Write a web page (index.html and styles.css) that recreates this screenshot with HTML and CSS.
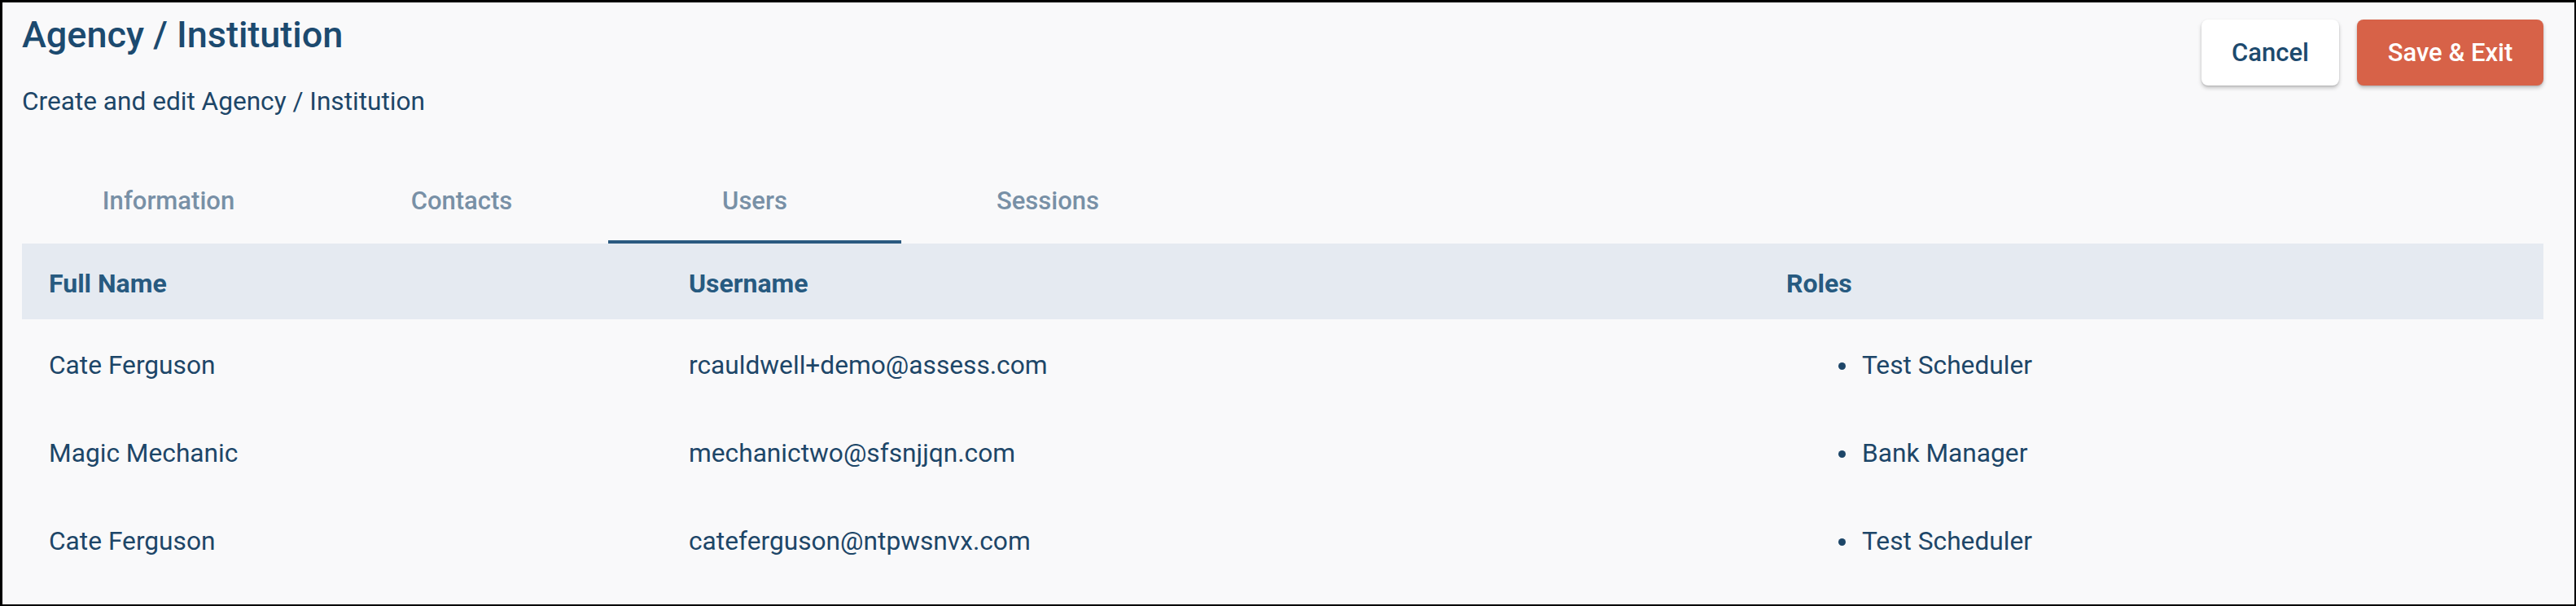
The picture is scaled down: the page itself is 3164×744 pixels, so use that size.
FILE: index.html
```html
<!DOCTYPE html>
<html lang="en">
<head>
<meta charset="utf-8">
<title>Agency / Institution</title>
<link rel="stylesheet" href="styles.css">
</head>
<body>
<div class="page">
  <header class="page-header">
    <div class="titles">
      <h1 class="title">Agency / Institution</h1>
      <p class="subtitle">Create and edit Agency / Institution</p>
    </div>
    <div class="actions">
      <button class="btn btn-cancel">Cancel</button>
      <button class="btn btn-save">Save &amp; Exit</button>
    </div>
  </header>

  <nav class="tabs">
    <div class="tab">Information</div>
    <div class="tab">Contacts</div>
    <div class="tab tab-active">Users</div>
    <div class="tab">Sessions</div>
  </nav>

  <div class="table">
    <div class="row head">
      <div class="cell">Full Name</div>
      <div class="cell">Username</div>
      <div class="cell">Roles</div>
    </div>
    <div class="row">
      <div class="cell">Cate Ferguson</div>
      <div class="cell">rcauldwell+demo@assess.com</div>
      <div class="cell"><ul class="roles"><li>Test Scheduler</li></ul></div>
    </div>
    <div class="row">
      <div class="cell">Magic Mechanic</div>
      <div class="cell">mechanictwo@sfsnjjqn.com</div>
      <div class="cell"><ul class="roles"><li>Bank Manager</li></ul></div>
    </div>
    <div class="row">
      <div class="cell">Cate Ferguson</div>
      <div class="cell">cateferguson@ntpwsnvx.com</div>
      <div class="cell"><ul class="roles"><li>Test Scheduler</li></ul></div>
    </div>
  </div>
</div>
</body>
</html>
```

FILE: styles.css
```css
* { box-sizing: border-box; }

html, body {
  margin: 0;
  padding: 0;
}

body {
  font-family: Roboto, "Liberation Sans", sans-serif;
  background: #000;
}

.page {
  width: 3164px;
  height: 744px;
  border-style: solid;
  border-color: #000;
  border-width: 3px 2px 2px 3px;
  background: #f9f9fa;
  padding: 0 38px 0 24px;
  overflow: hidden;
}

.page-header {
  display: flex;
  justify-content: space-between;
  align-items: flex-start;
}

.titles {
  padding-top: 14px;
}

.title {
  margin: 0;
  font-size: 45px;
  font-weight: 500;
  line-height: 1.172;
  color: #1c4a6f;
}

.subtitle {
  margin: 36px 0 0;
  font-size: 31.6px;
  font-weight: 400;
  line-height: 1.172;
  color: #1d4668;
}

.actions {
  display: flex;
  gap: 22px;
  margin-top: 21px;
}

.btn {
  height: 81px;
  border: none;
  border-radius: 8px;
  font-family: Roboto, "Liberation Sans", sans-serif;
  font-size: 31px;
  font-weight: 500;
  box-shadow: 0 3px 5px rgba(0, 0, 0, 0.22), 0 1px 2px rgba(0, 0, 0, 0.12);
  display: flex;
  align-items: center;
  justify-content: center;
  padding: 0;
}

.btn-cancel {
  width: 169px;
  background: #ffffff;
  color: #1d4a6e;
}

.btn-save {
  width: 229px;
  background: #d76248;
  color: #ffffff;
}

.tabs {
  display: flex;
  margin-top: 49px;
}

.tab {
  width: 360px;
  height: 107px;
  display: flex;
  align-items: center;
  justify-content: center;
  padding-top: 4px;
  font-size: 31px;
  font-weight: 500;
  line-height: 1.172;
  color: #7890a6;
}

.tab-active {
  box-shadow: inset 0 -4px 0 #2a5a80;
}

.table {
  display: flex;
  flex-direction: column;
}

.row {
  display: grid;
  grid-template-columns: 786px 1348px 963px;
  height: 108px;
  align-items: center;
  font-size: 31.7px;
  line-height: 1.172;
  color: #1d4668;
}

.row .cell {
  padding-top: 5px;
}

.row.head {
  height: 93px;
  background: #e5eaf1;
  font-size: 32px;
  font-weight: 700;
  color: #275a80;
}

.row.head .cell {
  padding-top: 7px;
}

.cell {
  padding-left: 33px;
}

.roles {
  list-style: none;
  margin: 0;
  padding: 0 0 0 64px;
}

.roles li::before {
  content: "";
  display: inline-block;
  width: 9px;
  height: 9px;
  border-radius: 50%;
  background: #1d4668;
  margin-right: 20px;
  vertical-align: 5px;
}
```
